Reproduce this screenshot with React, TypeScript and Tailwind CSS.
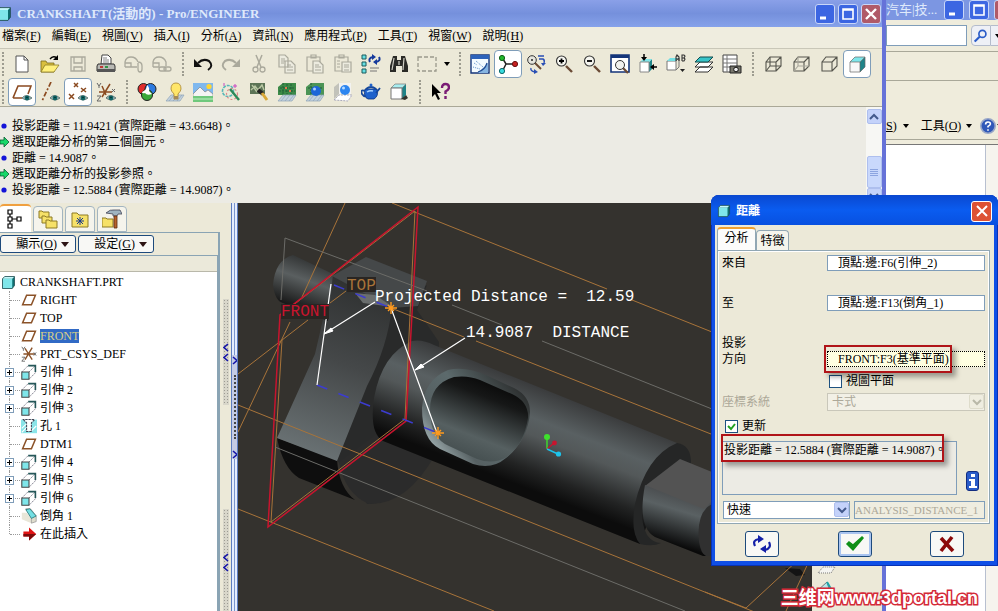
import React from 'react';
import clsx from 'clsx';

interface SvgProps {
  children: React.ReactNode;
  className?: string;
}

const Svg = ({ children, className = 'h-5 w-5' }: SvgProps) => (
  <svg viewBox="0 0 20 20" className={clsx('shrink-0', className)} fill="none" aria-hidden="true">
    {children}
  </svg>
);

/* ---------- shared drawing parts ---------- */

const Eye = () => (
  <g>
    <path d="M10 16q4-5 10 0q-5 4-10 0z" fill="#9fb8b8" stroke="#4a6464" strokeWidth="0.8" />
    <circle cx="15" cy="16" r="2.4" fill="#0f6464" />
    <circle cx="15" cy="15.5" r="0.8" fill="#052c2c" />
  </g>
);

const Ground = () => (
  <path d="M1 19l5-6h13l-4 6zM4 19l5-6M8 19l5-6M12 19l5-6" fill="#c4d2de" stroke="#8ea4b8" strokeWidth="0.7" />
);

const Cube = ({ className = 'h-4 w-4' }: { className?: string }) => (
  <Svg className={className}>
    <path d="M2 5l3-3h13v12l-3 4H2z" fill="#0c6e70" />
    <path d="M2 5h13v13H2z" fill="#7fe6ea" />
    <path d="M2 5l3-3h13l-3 3z" fill="#c4f8fa" />
    <path d="M2 5l3-3h13v12l-3 4H2z" stroke="#20484c" />
  </Svg>
);

const WireCube = ({ mode }: { mode: number }) => (
  <Svg>
    <path d="M3 8h10v9H3zM3 8l4-5h11v9l-5 5M13 8l5-5" stroke="#55554d" strokeWidth="1.1" />
    {mode < 2 && (
      <path d="M7 3v9h11M7 12l-4 5" stroke={mode === 0 ? '#55554d' : '#a8a79b'} strokeWidth="1.1" />
    )}
  </Svg>
);

const Lens = ({ sign }: { sign: '+' | '-' }) => (
  <Svg>
    <path d="M12 12l6 6" stroke="#6b4a35" strokeWidth="2.4" />
    <circle cx="7.500" cy="7" r="5" fill="#f6f6f0" stroke="#333" strokeWidth="1.1" />
    <path d={sign === '+' ? 'M5 7h5M7.500 4.500v5' : 'M5 7h5'} stroke="#000" strokeWidth="1.8" />
  </Svg>
);

const Plane = ({ className = 'h-4 w-4' }: { className?: string }) => (
  <Svg className={className}>
    <path d="M2 16L7 4h11l-5 12z" stroke="#8b5228" strokeWidth="1.9" />
  </Svg>
);

const Csys = ({ className = 'h-5 w-5' }: { className?: string }) => (
  <Svg className={className}>
    <path d="M3 10h14M5 3l9 14M14 2L5 17" stroke="#8b5228" strokeWidth="1.7" />
    <path d="M1 1l2 3 2-3M3 4v2M16 8l3 4M19 8l-3 4M1 14h4l-4 5h4" stroke="#555" strokeWidth="1" />
  </Svg>
);

const icons: Record<string, React.ReactNode> = {
  new: (
    <Svg>
      <path d="M4 2h8l4 4v12H4z" fill="#fff" stroke="#555" />
      <path d="M12 2v4h4" stroke="#555" />
    </Svg>
  ),
  open: (
    <Svg>
      <path d="M1 7h5l1 2h7v9H1z" fill="#d9bf3e" stroke="#7b6a1c" strokeWidth="0.8" />
      <path d="M1 18l4-7h14l-5 7z" fill="#fff07c" stroke="#8d7b24" strokeWidth="0.8" />
      <path d="M10 5q3-4 7-1" stroke="#000" strokeWidth="1.4" />
      <path d="M18 1v5h-5z" fill="#000" />
    </Svg>
  ),
  save: (
    <Svg>
      <path d="M3 3h14v14H3zM6 3v6h8V3M6 17v-4h8v4" stroke="#aaa99c" strokeWidth="1.3" />
    </Svg>
  ),
  print: (
    <Svg>
      <path d="M6 1h6l3 3v6H5z" fill="#fff" stroke="#444" />
      <path d="M7 4h4M7 6h6M7 8h6" stroke="#666" strokeWidth="0.8" />
      <path d="M2 10h16l1 2v5H1v-5z" fill="#b9b9b4" stroke="#333" />
      <path d="M1 15h18v3H1z" fill="#555" />
      <path d="M4 13h3" stroke="#c01818" strokeWidth="1.6" />
      <path d="M9 13h3" stroke="#108a28" strokeWidth="1.6" />
    </Svg>
  ),
  mail: (
    <Svg>
      <path d="M1 13V8q1-5 6-5t7 5M1 13h12M1 9h6v4M14 8q4 0 4 4v3q0 3-2 3t-2-3V9" stroke="#aaa99c" strokeWidth="1.3" />
    </Svg>
  ),
  mailLink: (
    <Svg>
      <path d="M1 13V8q1-5 6-5t7 5v4M1 13h6M1 9h6v4" stroke="#aaa99c" strokeWidth="1.3" />
      <rect x="7" y="13" width="7" height="4" rx="2" stroke="#aaa99c" strokeWidth="1.3" />
      <rect x="12" y="13" width="7" height="4" rx="2" stroke="#aaa99c" strokeWidth="1.3" />
    </Svg>
  ),
  undo: (
    <Svg>
      <path d="M5 9q5-5 11-2q5 5-1 9" stroke="#111" strokeWidth="2" />
      <path d="M1 5v8h8z" fill="#111" />
    </Svg>
  ),
  redo: (
    <Svg>
      <path d="M15 9Q10 4 4 7q-5 5 1 9" stroke="#aaa99c" strokeWidth="2" />
      <path d="M19 5v8h-8z" fill="#aaa99c" />
    </Svg>
  ),
  cut: (
    <Svg>
      <path d="M7 1l5 12M13 1L8 13" stroke="#aaa99c" strokeWidth="1.5" />
      <circle cx="6.500" cy="15.500" r="2.500" stroke="#aaa99c" strokeWidth="1.3" />
      <circle cx="13.500" cy="15.500" r="2.500" stroke="#aaa99c" strokeWidth="1.3" />
    </Svg>
  ),
  copy: (
    <Svg>
      <path d="M2 1h6l3 3v9H2zM8 7h6l4 4v8H8z" fill="#ecebdf" stroke="#aaa99c" strokeWidth="1.2" />
      <path d="M4 5h4M4 7h4M4 9h3M10 11h4M10 13h6M10 16h6" stroke="#aaa99c" />
    </Svg>
  ),
  paste: (
    <Svg>
      <path d="M2 3h13v14H2zM6 1h5v3H6z" stroke="#aaa99c" strokeWidth="1.2" />
      <path d="M8 7h6l4 4v8H8z" fill="#ecebdf" stroke="#aaa99c" strokeWidth="1.2" />
      <path d="M10 11h4M10 13h6M10 16h6" stroke="#aaa99c" />
    </Svg>
  ),
  pasteSpecial: (
    <Svg>
      <path d="M2 3h13v14H2zM6 1h5v3H6z" stroke="#aaa99c" strokeWidth="1.2" />
      <path d="M9 8h9v10H9z" fill="#ecebdf" stroke="#aaa99c" strokeWidth="1.2" />
      <path d="M4 7h3M4 10h3M4 13h3M11 11h5M11 13h5M11 16h5" stroke="#aaa99c" />
    </Svg>
  ),
  regenerate: (
    <Svg>
      {[1, 8, 15].map((y) => (
        <path key={y} d={`M1 ${y}h4v4H1z`} fill="#66dfe3" stroke="#1c5a5c" />
      ))}
      <path d="M9 8q-2-4 3-5M18 3q2 4-3 5" stroke="#163a9c" strokeWidth="2" />
      <path d="M11 0l4 3-4 3zM16 5v6l-4-3z" fill="#163a9c" />
      <path d="M9 14h9M9 17h7" stroke="#777" strokeWidth="1.2" />
    </Svg>
  ),
  find: (
    <Svg>
      <path d="M4 2h4v4h4V2h4l3 10v6h-6v-6H7v6H1v-6z" fill="#2a2a26" />
      <path d="M5 4l-2 12M15 4l-1 12M10 7v4" stroke="#d0cfc4" strokeWidth="1.2" />
    </Svg>
  ),
  select: (
    <Svg>
      <path d="M1 3h18v14H1z" stroke="#9a998c" strokeWidth="1.3" strokeDasharray="4 2" />
    </Svg>
  ),
  repaint: (
    <Svg>
      <path d="M1 1h18v18H1z" fill="#f4fbff" stroke="#14357a" strokeWidth="1.4" />
      <path d="M1 1h18v4H1z" fill="#2d62ba" />
      <path d="M8 19l10-10v10z" fill="#86b5e2" />
      <path d="M4 9l3 2M6 7l7 6M3 13l7 2" stroke="#5c8dc8" strokeDasharray="1 1" />
      <path d="M8 18q7-2 9-9" stroke="#224d94" strokeWidth="1.2" />
    </Svg>
  ),
  spin: (
    <Svg>
      <path d="M5 5l3 5h8M8 10l-3 6" stroke="#222" strokeWidth="1.5" />
      <circle cx="4" cy="4" r="2.600" fill="#22b82c" stroke="#0d5c14" />
      <circle cx="17" cy="10" r="2.600" fill="#c62020" stroke="#6a1010" />
      <circle cx="4" cy="17" r="2.600" fill="#38dce0" stroke="#0c686a" />
    </Svg>
  ),
  orient: (
    <Svg>
      <path d="M9 9l6 6" stroke="#6b4a35" strokeWidth="2" />
      <circle cx="6" cy="6" r="4.300" fill="#e6e6de" stroke="#333" />
      <circle cx="6" cy="6" r="1" fill="#222" />
      <path d="M12 2h6M13 5h4q2 1 1 4M5 14q-1 3 4 4" stroke="#2a4fb4" strokeWidth="1.4" />
      <path d="M15 9h5l-3 3zM8 15l4 3-4 2z" fill="#2a4fb4" />
    </Svg>
  ),
  zoomIn: <Lens sign="+" />,
  zoomOut: <Lens sign="-" />,
  refit: (
    <Svg>
      <path d="M1 1h18v17H1z" fill="#fff" stroke="#14357a" strokeWidth="1.6" />
      <path d="M1 1h18v3H1z" fill="#14357a" />
      <path d="M13 14l5 5" stroke="#6b4a35" strokeWidth="2.200" />
      <circle cx="10" cy="11" r="4.500" fill="#f2f2ee" stroke="#333" />
    </Svg>
  ),
  reorient: (
    <Svg>
      <path d="M11 8l3-3v10l-3 3z" fill="#1f8488" />
      <path d="M2 8l3-3h9l-3 3z" fill="#7fe6ea" />
      <path d="M2 8h9v10H2z" fill="#fff" stroke="#888" />
      <path d="M6 0v5M19 13h-5" stroke="#000" strokeWidth="1.5" />
      <path d="M3 3h6l-3 4zM16 10v6l-4-3z" fill="#000" />
    </Svg>
  ),
  savedViews: (
    <Svg>
      <path d="M1 7h9v9H1z" fill="#fff" stroke="#777" />
      <path d="M1 7l3-3h8l-2 3z" fill="#74dfe3" />
      <path d="M10 7l3-3v9l-3 3" stroke="#777" />
      <path d="M10 7V3l1-2 2 2v4M10 5h3M16 7V1h2l1 1-1 2h-2M18 4l1 1-1 2h-2" stroke="#333" strokeWidth="1.100" />
      <path d="M14 15h5l-2.500 3z" fill="#222" />
    </Svg>
  ),
  layers: (
    <Svg>
      <path d="M1 18l5-5h13l-5 5zM1 13l5-5h13l-5 5z" fill="#fff" stroke="#333" />
      <path d="M1 8l5-5h13l-5 5z" fill="#38c4c8" stroke="#124c4e" />
    </Svg>
  ),
  viewManager: (
    <Svg>
      <path d="M1 1h14v17H1z" fill="#fff" stroke="#444" />
      <path d="M5 1v17M1 5h14M1 9h14M1 13h14" stroke="#777" />
      <path d="M8 12h11v7H8z" fill="#77766c" stroke="#222" />
      <circle cx="14" cy="15.500" r="2.300" fill="#eee" stroke="#111" />
    </Svg>
  ),
  wireframe: <WireCube mode={0} />,
  hiddenLine: <WireCube mode={1} />,
  noHidden: <WireCube mode={2} />,
  shaded: (
    <Svg>
      <path d="M13 8l5-5v10l-5 5z" fill="#1f8488" />
      <path d="M3 8l5-5h10l-5 5z" fill="#7fe6ea" />
      <path d="M3 8h10v10H3z" fill="#f8f8f8" />
      <path d="M3 8l5-5h10v10l-5 5H3zM3 8h10v10M13 8l5-5" stroke="#666" strokeWidth="0.700" />
    </Svg>
  ),
  planeDisplay: (
    <Svg>
      <path d="M1 16L6 4h13l-3 8M1 16h9" stroke="#8b4a20" strokeWidth="1.600" />
      <Eye />
    </Svg>
  ),
  axisDisplay: (
    <Svg>
      <path d="M11 0L2 19" stroke="#8b4a20" strokeWidth="1.700" strokeDasharray="5 2 2 2" />
      <Eye />
    </Svg>
  ),
  pointDisplay: (
    <Svg>
      <path d="M6 1l4 4M10 1L6 5M1 12l5 5M6 12l-5 5M13 6l5 4M18 6l-5 4" stroke="#8b4a20" strokeWidth="1.500" />
      <Eye />
    </Svg>
  ),
  csysDisplay: (
    <Svg>
      <path d="M3 10h13M6 4l4 9M14 2L6 15" stroke="#8b4a20" strokeWidth="1.500" />
      <path d="M1 1l2 3 2-3M3 4v2M16 7l3 3M19 7l-3 3M1 14h4l-4 5h4" stroke="#666" />
      <Eye />
    </Svg>
  ),
  colors: (
    <Svg>
      <circle cx="6.500" cy="7" r="5.500" fill="#e02c2c" stroke="#222" />
      <circle cx="13.500" cy="7" r="5.500" fill="#2c7ae0" stroke="#222" />
      <circle cx="10" cy="13" r="5.500" fill="#3aa83a" stroke="#222" />
      <path d="M10 3q3 3 2 6l3 3q-5 2-7-1-3 1-3-1 5-2 5-7z" fill="#fff" />
    </Svg>
  ),
  light: (
    <Svg>
      <Ground />
      <path d="M6 7q0-6 5-6t5 6q0 2-3 5v5H9v-5Q6 9 6 7z" fill="#ffe66a" stroke="#a8842c" strokeWidth="0.800" />
      <path d="M9 14h4v3H9z" fill="#a58a58" />
    </Svg>
  ),
  scene: (
    <Svg>
      <path d="M0 1h20v11H0z" fill="#7fb8ee" />
      <path d="M0 12l7-7 5 5 3-2 5 4v3H0z" fill="#f4f4f4" stroke="#777" strokeWidth="0.600" />
      <circle cx="16" cy="4.500" r="2.600" fill="#ffd634" />
      <path d="M0 14h20v6H0z" fill="#6fc87c" />
      <path d="M0 17h20" stroke="#c2f0c4" />
    </Svg>
  ),
  effects: (
    <Svg>
      <circle cx="7" cy="9" r="5.500" stroke="#58b8b8" strokeWidth="1.600" strokeDasharray="3 1" />
      <circle cx="11" cy="12" r="5.500" stroke="#e08a8a" strokeWidth="1.200" strokeDasharray="2 2" />
      <path d="M9 7l9 11" stroke="#2c8a5a" strokeWidth="2.400" />
      <path d="M14 2v4M12 4h4M3 1v3" stroke="#c848c0" />
    </Svg>
  ),
  gallery: (
    <Svg>
      <path d="M1 1h15v11H1z" fill="#5c7456" />
      <path d="M2 8l4-4 3 4 4-5 2 5M3 3l5 7" stroke="#b9c8a4" strokeWidth="1.400" />
      <path d="M9 8l5 4" stroke="#222" strokeWidth="4" />
      <path d="M13 11l5 7" stroke="#d8a838" strokeWidth="3" />
    </Svg>
  ),
  room: (
    <Svg>
      <path d="M1 5l5-4h13v12H1z" fill="#3c8a48" />
      <path d="M6 1v12M10 2v10M14 2v10M3 6h15M2 9h16" stroke="#1d5a38" strokeWidth="0.900" strokeDasharray="2 1" />
      <path d="M8 5h2v2H8zM12 8h2v2h-2z" fill="#e07a50" />
      <Ground />
    </Svg>
  ),
  roomBall: (
    <Svg>
      <path d="M1 5l5-4h13v12H1z" fill="#4c9456" />
      <path d="M6 1v12M3 6h15" stroke="#1d5a38" strokeDasharray="2 1" />
      <Ground />
      <circle cx="11" cy="9" r="5" fill="#1d66d8" />
      <circle cx="9.500" cy="7" r="1.500" fill="#a8d0ff" />
    </Svg>
  ),
  ball: (
    <Svg>
      <path d="M1 5l5-4v11l-5 5z" fill="#c2c2ba" />
      <path d="M6 1h12v11H6z" fill="#f2f2f0" />
      <path d="M1 18l5-5h13l-4 6z" fill="#fff" stroke="#aab" strokeDasharray="2 1" />
      <circle cx="12" cy="8" r="5" fill="#2d86f0" />
      <circle cx="10.500" cy="6" r="1.500" fill="#b8dcff" />
    </Svg>
  ),
  render: (
    <Svg>
      <path d="M4 7h12q2 7-3 10H7q-5-2-3-10z" fill="#1f62cc" stroke="#0d3480" strokeWidth="0.800" />
      <path d="M15 11l4-5M4 9Q-1 7 1 12q2 3 4 2M5 7q5-4 10 0" stroke="#15489c" strokeWidth="1.800" />
      <circle cx="10" cy="3" r="1.500" fill="#1f62cc" />
      <path d="M6 10q3-2 6-1" stroke="#a9d4ff" strokeWidth="1.500" />
    </Svg>
  ),
  perspective: (
    <Svg>
      <path d="M13 6l4-4v11l-4 4z" fill="#1f8488" />
      <path d="M2 6l4-4h11l-4 4z" fill="#a8eef0" stroke="#777" strokeWidth="0.700" />
      <path d="M2 6h11v11H2z" fill="#fff" stroke="#777" />
      <path d="M12 17l5-4 2 3-3 2z" fill="#33332c" />
    </Svg>
  ),
  help: (
    <Svg>
      <path d="M2 2v13l3-3 3 6 2-1-3-6h4z" fill="#000" />
      <path d="M12 6q0-4 3.500-4T19 5.500q0 2-3.500 4V12M15.500 14v3" stroke="#7a1c74" strokeWidth="2.400" />
    </Svg>
  ),
};

/* ---------- main window ---------- */

const menus = [
  ['檔案', 'F'], ['編輯', 'E'], ['視圖', 'V'], ['插入', 'I'], ['分析', 'A'],
  ['資訊', 'N'], ['應用程式', 'P'], ['工具', 'T'], ['視窗', 'W'], ['說明', 'H'],
];

const ToolGroup = ({ names, active = [] }: { names: string[]; active?: string[] }) => (
  <div className="flex shrink-0">
    {names.map((name) => (
      <button
        key={name}
        aria-label={name}
        className={clsx(
          'flex h-7 w-7 shrink-0 items-center justify-center',
          active.includes(name) && 'rounded-sm border border-[#7f9db9] bg-white'
        )}
      >
        {icons[name]}
      </button>
    ))}
  </div>
);

const Grip = () => (
  <div className="flex w-[13px] shrink-0 justify-center">
    <div className="h-6 border-l-2 border-dotted border-[#9d9c90]" />
  </div>
);

const CaptionButton = ({ kind }: { kind: 'min' | 'max' | 'close' }) => (
  <button
    aria-label={kind}
    className={clsx(
      'flex h-5 w-5 shrink-0 items-center justify-center rounded-[3px] border border-[#c9d6f8]',
      kind === 'close' ? 'bg-[#b05a68]' : 'bg-[#3c66e2]'
    )}
  >
    <svg viewBox="0 0 16 16" className="h-4 w-4" fill="none" stroke="#fff" aria-hidden="true">
      {kind === 'min' && <path d="M3 12h6" strokeWidth="3" />}
      {kind === 'max' && <path d="M3 3h10v10H3zM3 4h10" strokeWidth="1.600" />}
      {kind === 'close' && <path d="M3 3l10 10M13 3L3 13" strokeWidth="2.400" />}
    </svg>
  </button>
);

const Chevron = ({ up, muted }: { up?: boolean; muted?: boolean }) => (
  <span
    className={clsx(
      'flex h-[15px] w-[15px] shrink-0 items-center justify-center rounded-xs border',
      muted ? 'border-[#dedccb] bg-[#efede0]' : 'border-[#aebfee] bg-[#c4d2fa]'
    )}
  >
    <svg viewBox="0 0 10 10" className="h-[10px] w-[10px]" fill="none" aria-hidden="true">
      <path d={up ? 'M1 7l4-4 4 4' : 'M1 3l4 4 4-4'} stroke={muted ? '#b9b8a8' : '#43598c'} strokeWidth="2" />
    </svg>
  </span>
);

const messages = [
  { prompt: false, text: '投影距離 = 11.9421 (實際距離 = 43.6648)。' },
  { prompt: true, text: '選取距離分析的第二個圖元。' },
  { prompt: false, text: '距離 = 14.9087。' },
  { prompt: true, text: '選取距離分析的投影參照。' },
  { prompt: false, text: '投影距離 = 12.5884 (實際距離 = 14.9087)。' },
];

const MessageLog = () => (
  <div className="flex h-24 shrink-0 bg-[#ecebe4]">
    <ul className="flex flex-1 flex-col justify-end pb-[5px]">
      {messages.map((m) => (
        <li key={m.text} className="flex h-4 items-center gap-[2px] leading-4">
          <svg viewBox="0 0 10 12" className="h-3 w-[10px]" aria-hidden="true">
            {m.prompt ? (
              <path d="M0 4h4V1l5 5-5 5V8H0z" fill="#18d868" stroke="#0b5c30" strokeWidth="0.800" />
            ) : (
              <circle cx="4" cy="6" r="2.600" fill="#1414d8" />
            )}
          </svg>
          {m.text}
        </li>
      ))}
    </ul>
    <div className="flex w-4 flex-col items-center bg-[#f7f7f4] pt-[2px]">
      <Chevron up />
      <div className="flex-1" />
      <div className="flex h-8 w-[15px] shrink-0 flex-col items-center justify-center gap-px rounded-xs border border-[#aebfee] bg-[#c9d8fc]">
        {[0, 1, 2, 3].map((i) => (
          <span key={i} className="h-px w-2 bg-[#8ca4e0]" />
        ))}
      </div>
      <Chevron />
    </div>
  </div>
);

/* ---------- model tree ---------- */

const treeIcons: Record<string, React.ReactNode> = {
  plane: <Plane />,
  csys: <Csys className="h-4 w-4" />,
  extrude: (
    <Svg className="h-4 w-4">
      <path d="M1 10l8-8h9v9l-8 8M10 10l8-8" stroke="#667" strokeDasharray="2 1" />
      <path d="M9 2h9v8" stroke="#26585a" strokeWidth="2" />
      <path d="M1 10h9v9H1z" fill="#7fe6ea" stroke="#444" strokeWidth="1.300" />
    </Svg>
  ),
  hole: (
    <Svg className="h-4 w-4">
      <path d="M0 2h20v17H0z" fill="#8ae4e8" />
      <path d="M1 13l6-6M1 18l6-6M13 16l6-6" stroke="#fff" strokeWidth="1.400" />
      <path d="M3 2l4 4v11h6V6l4-4z" fill="#fff" stroke="#445" strokeWidth="1.300" strokeDasharray="3 1" />
    </Svg>
  ),
  chamfer: (
    <Svg className="h-4 w-4">
      <path d="M1 6h6l6 7v6L1 14z" fill="#e8e6d8" />
      <path d="M6 1h6l7 9v7l-6 2v-7z" fill="#dedccd" stroke="#888" strokeWidth="0.800" />
      <path d="M6 2l5-1 8 9-6 3z" fill="#74dfe3" stroke="#267274" />
    </Svg>
  ),
  insert: (
    <Svg className="h-4 w-4">
      <path d="M3 7h7V2l9 8-9 8v-5H3z" fill="#e01414" />
      <path d="M3 10h16l-9 8v-5H3z" fill="#7c0a0a" />
    </Svg>
  ),
};

interface TreeItem {
  label: string;
  icon: string;
  expandable?: boolean;
  selected?: boolean;
}

const treeItems: TreeItem[] = [
  { label: 'RIGHT', icon: 'plane' },
  { label: 'TOP', icon: 'plane' },
  { label: 'FRONT', icon: 'plane', selected: true },
  { label: 'PRT_CSYS_DEF', icon: 'csys' },
  { label: '引伸 1', icon: 'extrude', expandable: true },
  { label: '引伸 2', icon: 'extrude', expandable: true },
  { label: '引伸 3', icon: 'extrude', expandable: true },
  { label: '孔 1', icon: 'hole' },
  { label: 'DTM1', icon: 'plane' },
  { label: '引伸 4', icon: 'extrude', expandable: true },
  { label: '引伸 5', icon: 'extrude', expandable: true },
  { label: '引伸 6', icon: 'extrude', expandable: true },
  { label: '倒角 1', icon: 'chamfer' },
  { label: '在此插入', icon: 'insert' },
];

const tabClass =
  'flex h-[26px] w-[30px] items-center justify-center rounded-t-sm border border-[#a3b5c0] bg-[#f5f4ec]';

const TreeTabs = () => (
  <div className="flex h-[29px] shrink-0 items-end gap-[2px] pt-px">
    <button aria-label="Model tree" className="flex h-7 w-[31px] items-center justify-center rounded-t-sm border-t-2 border-[#f0a040] bg-white pr-1">
      <Svg>
        <path d="M4 1h4v4H4zM4 8h4v4H4zM4 15h4v4H4zM13 8h4v4h-4zM6 5v3M6 12v3M8 10h5" stroke="#000" strokeWidth="1.200" />
      </Svg>
    </button>
    <button aria-label="Folders" className={tabClass}>
      <Svg>
        <path d="M1 2h3l1 1h6v6H1z" fill="#f6e168" stroke="#8d7b24" />
        <path d="M4 7h3l1 1h6v6H4z" fill="#f6e168" stroke="#8d7b24" />
        <path d="M8 11h3l1 1h7v7H8z" fill="#f6e168" stroke="#8d7b24" />
      </Svg>
    </button>
    <button aria-label="Favorites" className={tabClass}>
      <Svg>
        <path d="M2 4h5l2 2h9v12H2z" fill="#f6e168" stroke="#8d7b24" />
        <path d="M10 8v8M6 12h8M7 9l6 6M13 9l-6 6" stroke="#1a3a8c" />
      </Svg>
    </button>
    <button aria-label="Connections" className={tabClass}>
      <Svg>
        <path d="M0 9h4l1 1h6v8H0z" fill="#f6e168" stroke="#8d7b24" />
        <path d="M4 4q4-4 9-3h5l2 4h-4l-1 2h-4V5z" fill="#9fb4c0" stroke="#445" strokeWidth="0.800" />
        <path d="M12 7h3v12h-3z" fill="#b8622c" stroke="#5c2c10" strokeWidth="0.800" />
      </Svg>
    </button>
  </div>
);

const PanelButton = ({ label, hotkey }: { label: string; hotkey: string }) => (
  <button className="flex h-[18px] w-[76px] items-center justify-end gap-1 rounded-[3px] border border-[#1d4a7c] bg-[#f8f8f5] pr-[6px] leading-4">
    <span>{label}(<u>{hotkey}</u>)</span>
    <svg viewBox="0 0 8 5" className="h-[5px] w-2" aria-hidden="true">
      <path d="M0 0h8L4 5z" fill="#2c1414" />
    </svg>
  </button>
);

const ModelTree = () => (
  <aside className="flex w-[220px] shrink-0 flex-col">
    <TreeTabs />
    <div className="flex flex-1 flex-col border-t border-r-2 border-[#8aa4b4]">
      <div className="flex shrink-0 gap-[2px] py-[2px]">
        <PanelButton label="顯示" hotkey="O" />
        <PanelButton label="設定" hotkey="G" />
      </div>
      <div className="flex flex-1 flex-col border-t border-r border-[#8aa4b4]">
        <div className="h-4 shrink-0 border-b border-[#b9b8aa] bg-[#ebe9da]" />
        <ul className="flex-1 bg-white pt-px">
          <li className="flex h-[18px] items-center gap-1 pl-px">
            <Cube className="h-[15px] w-[15px]" />
            CRANKSHAFT.PRT
          </li>
          {treeItems.map((item, i) => (
            <li key={item.label} className="flex h-[18px] items-center">
              <span className="relative flex h-full w-5 shrink-0 items-center pl-[5px]">
                <span
                  className={clsx(
                    'absolute top-0 left-[9px] border-l border-dotted border-[#9a9a9a]',
                    i === treeItems.length - 1 ? 'h-1/2' : 'h-full'
                  )}
                />
                <span className="absolute top-1/2 right-0 left-[10px] border-t border-dotted border-[#9a9a9a]" />
                {item.expandable && (
                  <button
                    aria-label={`Expand ${item.label}`}
                    className="relative flex h-[9px] w-[9px] items-center justify-center border border-[#7f9db9] bg-white"
                  >
                    <svg viewBox="0 0 7 7" className="h-[7px] w-[7px] shrink-0" aria-hidden="true">
                      <path d="M1 3.500h5M3.500 1v5" stroke="#000" />
                    </svg>
                  </button>
                )}
              </span>
              <span className="mr-[3px] ml-px">{treeIcons[item.icon]}</span>
              <span className={clsx('leading-[14px]', item.selected && 'bg-[#316ac5] text-[#d8d088]')}>
                {item.label}
              </span>
            </li>
          ))}
        </ul>
      </div>
    </div>
  </aside>
);

const Arrows = ({ d }: { d: string }) => (
  <svg viewBox="0 0 6 20" className="h-5 w-[6px] shrink-0" fill="none" aria-hidden="true">
    <path d={d} stroke="#1414a8" strokeWidth="1.600" />
  </svg>
);

const Hatch = () => (
  <div className="flex h-[106px] w-[6px] shrink-0 flex-col items-center justify-center bg-[#d8d6ca] bg-[radial-gradient(#9c9b92_1px,transparent_1px)] bg-[length:3px_3px]">
    <Arrows d="M5 2L1 5.500l4 3.500M5 12l-4 3.500 4 3.500" />
  </div>
);

const Splitter = () => (
  <div className="flex w-[18px] shrink-0">
    <div className="flex w-[11px] flex-col items-center overflow-hidden pt-24">
      <Hatch />
      <div className="h-[104px] shrink-0" />
      <Hatch />
    </div>
    <div className="flex flex-1 flex-col overflow-hidden border-x border-[#5c7cc0] bg-[#e4ecfc]">
      <div className="w-[3px] flex-1 border-r border-[#7a94cc]" />
      <div className="flex h-[104px] shrink-0 flex-col items-center justify-between bg-[#c4cbe4]">
        <Arrows d="M1 2l4 3.500L1 9" />
        <div className="flex-1 border-l-2 border-dotted border-[#444]" />
        <Arrows d="M1 12l4 3.500L1 19" />
      </div>
      <div className="w-[3px] flex-1 border-r border-[#7a94cc]" />
    </div>
  </div>
);

/* ---------- 3D view ---------- */

const Star = ({ x, y }: { x: number; y: number }) => (
  <path
    d={`M${x - 6} ${y}h12M${x} ${y - 6}v12M${x - 3} ${y - 3}l6 6M${x + 3} ${y - 3}l-6 6`}
    stroke="#ff9a1e"
    strokeWidth="1.400"
  />
);

const ModelView = () => (
  <div className="relative min-w-0 flex-1 bg-[#34322e]">
    <svg
      viewBox="238 203 574 408"
      preserveAspectRatio="xMinYMin slice"
      className="absolute inset-0 h-full w-full"
      fill="none"
      fontFamily='"Liberation Mono", monospace'
      fontSize="16"
    >
      <defs>
        <linearGradient id="pin" gradientUnits="userSpaceOnUse" x1="312" y1="258" x2="293" y2="312">
          <stop offset="0" stopColor="#2e3030" />
          <stop offset="0.400" stopColor="#5a5f60" />
          <stop offset="0.700" stopColor="#333535" />
          <stop offset="1" stopColor="#0a0a0a" />
        </linearGradient>
        <linearGradient id="web" gradientUnits="userSpaceOnUse" x1="370" y1="290" x2="310" y2="455">
          <stop offset="0" stopColor="#303232" />
          <stop offset="0.450" stopColor="#454849" />
          <stop offset="1" stopColor="#6a7274" />
        </linearGradient>
        <linearGradient id="journal" gradientUnits="userSpaceOnUse" x1="552" y1="390" x2="512" y2="492">
          <stop offset="0" stopColor="#38393a" />
          <stop offset="0.300" stopColor="#596062" />
          <stop offset="0.450" stopColor="#535859" />
          <stop offset="0.750" stopColor="#222323" />
          <stop offset="0.920" stopColor="#0c0c0c" />
        </linearGradient>
        <linearGradient id="bore" gradientUnits="userSpaceOnUse" x1="498" y1="380" x2="468" y2="456">
          <stop offset="0" stopColor="#070707" />
          <stop offset="0.250" stopColor="#161717" />
          <stop offset="0.750" stopColor="#566061" />
          <stop offset="1" stopColor="#465051" />
        </linearGradient>
        <linearGradient id="rim" gradientUnits="userSpaceOnUse" x1="435" y1="455" x2="520" y2="385">
          <stop offset="0" stopColor="#a4b4b6" />
          <stop offset="0.250" stopColor="#566062" />
          <stop offset="0.550" stopColor="#5c6a6c" />
          <stop offset="1" stopColor="#2a2c2c" />
        </linearGradient>
        <linearGradient id="shaft" gradientUnits="userSpaceOnUse" x1="682" y1="496" x2="668" y2="543">
          <stop offset="0" stopColor="#4b4e50" />
          <stop offset="0.300" stopColor="#5a6163" />
          <stop offset="1" stopColor="#0a0a0a" />
        </linearGradient>
      </defs>

      {/* crank web */}
      <path d="M392 305l35-20-10 25 22 32-6 110q-28 52-66 52l-30-44z" fill="#292a2a" />
      <path d="M435 455q-28 50-66 49-24-10-30-42l40-30z" fill="#2b2b2b" />
      <path d="M277 438l60 22q2 28 18 40l-56-22q-16-10-22-40z" fill="#0e0e0e" />
      <path d="M333 276l59 30q-4 40-25 80l-30 75-60-23 38-84z" fill="url(#web)" />
      <path d="M366 257l61 24-9 25-26 2-60-32z" fill="#454849" />
      <path d="M355 293l20 2 18 12-30-4z" fill="#6a6e6e" />

      {/* crank pin */}
      <path d="M293 255q-18 5-20 30 2 16 10 18l45 18 5-47z" fill="url(#pin)" />

      {/* main journal */}
      <path d="M412 341q10-2 22 4l243 98-37 101-257-103q-14-8-9-43 8-44 38-57z" fill="url(#journal)" />
      <path d="M677 443q14 2 14 20l-44 26q-10 26 0 46 6 8 14 8-8 4-21 1-10-12-5-40 11-48 42-61z" fill="#252626" />
      <path d="M680 459l32 13v34l-8 4-59-24z" fill="#535353" />
      <path d="M645 485l59 24 8-8v55l-9 0-48-19q-18-10-10-52z" fill="url(#shaft)" />
      <path d="M712 504q-16 8-13 38 2 12 7 14h6z" fill="#303030" />

      {/* oil slot */}
      <path
        d="M422 408q2-28 26-38 18-4 40 6l26 12q16 8 16 24-2 28-24 46-14 12-33 6l-33-15q-18-9-18-41z"
        fill="url(#rim)"
      />
      <path
        d="M430 410q0-26 24-33 14-2 26 3l32 14q17 8 16 24-4 26-21 39-14 8-30 2l-28-13q-19-8-19-36z"
        fill="url(#bore)"
      />
      <path d="M785 568l15 1 5 6-9 1z" fill="#141414" />

      {/* datum plane outlines */}
      <g stroke="#a8743a" strokeWidth="1">
        <path d="M345 203L302 297M290 322L238 432M392 203l215 86M632 300l180 72" />
        <path d="M238 374l70-54M330 303l16-12M391 308l73 29M476 341l336 133" />
        <path d="M238 405l574 230M238 509l256 102" />
        <path d="M415 211L283 313M282 340L271 522L405 419L415 211" />
        <path d="M705 592l41 16 52-48M786 611l24-52" />
      </g>
      <g stroke="#6c6c68" strokeWidth="1">
        <path d="M281 300l4-62 142 53M452 305l50 20M542 341l170 68M275 447l410 164" />
      </g>
      <path d="M418 207L280 315l-12 212 138-106z" stroke="#c8142e" strokeWidth="1.500" />

      {/* measurement */}
      <path d="M334 285l57 23M317 385l121 48" stroke="#3c3cd0" strokeWidth="1.500" strokeDasharray="11 12" />
      <path
        d="M331 284l-14 101M375 302l-51 32M391 308l46 125M465 338l-50 32"
        stroke="#fff"
        strokeWidth="1.200"
      />
      <path d="M324 334l7-6 2 3zM415 370l6-6 3 3z" fill="#fff" stroke="#fff" />
      <Star x={391} y={308} />
      <Star x={438} y={433} />

      <path d="M347 277h29v15h-29zM281 304h48v15h-48z" fill="#292522" />
      <text x="347" y="290" fill="#a8743a">TOP</text>
      <text x="281" y="316" fill="#c8142e">FRONT</text>
      <text x="375" y="301" fill="#fff" className="whitespace-pre">{'Projected Distance =  12.59'}</text>
      <text x="466" y="337" fill="#fff" className="whitespace-pre">{'14.9087  DISTANCE'}</text>

      {/* spin centre */}
      <path d="M547 449v-12" stroke="#3ee02c" strokeWidth="1.400" />
      <path d="M547 449l7-6" stroke="#c8142e" strokeWidth="1.400" />
      <path d="M547 449l11 5" stroke="#1cc4ec" strokeWidth="1.400" />
      <circle cx="547" cy="437" r="3" fill="#3ee02c" />
      <circle cx="554.500" cy="443" r="2.400" fill="#c8142e" />
      <circle cx="558.500" cy="454" r="2.600" fill="#1cc4ec" />
    </svg>
  </div>
);

const FeatureBar = () => (
  <div className="flex w-[70px] shrink-0 flex-col bg-[#ece9d8] pt-[356px] pl-1">
    <Svg>
      <path d="M2 14l5-6h12l-4 6z" fill="#f4f4f0" stroke="#777" strokeDasharray="1 1" />
    </Svg>
    <Svg>
      <path d="M1 12l10-9 3 10-3 6z" fill="#b4e8ea" stroke="#777" />
      <path d="M11 3l8 14" stroke="#1ca4a8" strokeWidth="2" />
    </Svg>
  </div>
);

const MainWindow = () => (
  <section className="flex min-w-0 flex-1 flex-col border-r-4 border-[#6672d8] bg-[#ece9d8]">
    <header className="flex h-[27px] shrink-0 items-center bg-linear-to-b from-[#8aa0e8] via-[#7590dc] to-[#86a2ea] pr-px">
      <Cube className="-ml-1 h-4 w-4" />
      <h1 className="ml-[5px] flex-1 text-[13px] font-bold text-[#dfe9fb]">CRANKSHAFT(活動的) - Pro/ENGINEER</h1>
      <div className="flex gap-[3px]">
        <CaptionButton kind="min" />
        <CaptionButton kind="max" />
        <CaptionButton kind="close" />
      </div>
    </header>
    <nav className="flex h-[22px] shrink-0 items-center gap-[11px] border-b border-[#c9c7b8] bg-[#efeddf] pb-1 pl-[2px]">
      {menus.map(([label, key]) => (
        <button key={label} className="whitespace-nowrap">
          {label}(<u>{key}</u>)
        </button>
      ))}
    </nav>
    <div className="flex shrink-0 flex-col border-b border-[#aaa897] pt-px">
      <div className="flex h-7 items-center overflow-hidden">
        <div className="mr-1 ml-[2px] h-6 shrink-0 border-l-2 border-dotted border-[#9d9c90]" />
        <ToolGroup names={['new', 'open', 'save', 'print', 'mail', 'mailLink']} />
        <Grip />
        <ToolGroup names={['undo', 'redo', 'cut', 'copy', 'paste', 'pasteSpecial', 'regenerate', 'find', 'select']} />
        <button aria-label="Selection options" className="flex w-3 shrink-0 justify-center">
          <svg viewBox="0 0 6 4" className="h-1 w-[6px]" aria-hidden="true">
            <path d="M0 0h6L3 4z" fill="#000" />
          </svg>
        </button>
        <Grip />
        <ToolGroup
          names={['repaint', 'spin', 'orient', 'zoomIn', 'zoomOut', 'refit', 'reorient', 'savedViews', 'layers', 'viewManager']}
          active={['spin']}
        />
        <Grip />
        <ToolGroup names={['wireframe', 'hiddenLine', 'noHidden', 'shaded']} active={['shaded']} />
      </div>
      <div className="flex h-7 items-center overflow-hidden">
        <div className="mr-1 ml-[2px] h-6 shrink-0 border-l-2 border-dotted border-[#9d9c90]" />
        <ToolGroup
          names={['planeDisplay', 'axisDisplay', 'pointDisplay', 'csysDisplay']}
          active={['planeDisplay', 'pointDisplay']}
        />
        <Grip />
        <ToolGroup
          names={['colors', 'light', 'scene', 'effects', 'gallery', 'room', 'roomBall', 'ball', 'render', 'perspective']}
        />
        <Grip />
        <ToolGroup names={['help']} />
      </div>
    </div>
    <MessageLog />
    <div className="flex min-h-0 flex-1">
      <ModelTree />
      <Splitter />
      <ModelView />
      <FeatureBar />
    </div>
  </section>
);

/* ---------- browser window behind ---------- */

const DropArrow = () => (
  <svg viewBox="0 0 6 4" className="h-1 w-[6px] shrink-0" aria-hidden="true">
    <path d="M0 0h6L3 4z" fill="#000" />
  </svg>
);

const BrowserWindow = () => (
  <section className="flex w-28 shrink-0 flex-col overflow-hidden bg-[#efecdc]">
    <header className="flex h-5 shrink-0 items-center gap-[5px] bg-[#7c96e2] text-[13px] text-[#dfe9fb]">
      <span className="w-[53px] shrink-0 whitespace-nowrap">汽车|技...</span>
      <CaptionButton kind="min" />
      <CaptionButton kind="max" />
      <CaptionButton kind="close" />
    </header>
    <div className="flex h-8 shrink-0 items-center gap-1 border-b border-[#a9a899]">
      <input aria-label="Address" className="h-[21px] w-[81px] border border-[#7f9db9] bg-white" />
      <div className="flex">
        <button aria-label="Search" className="flex h-[21px] w-5 shrink-0 items-center justify-center rounded-l-sm border border-[#b4bccc] bg-[#eef0f6]">
          <Svg className="h-[14px] w-[14px]">
            <circle cx="12" cy="7" r="5" stroke="#2a5cc8" strokeWidth="2.400" />
            <path d="M8 11l-7 7" stroke="#2a5cc8" strokeWidth="3" />
          </Svg>
        </button>
        <button aria-label="Search options" className="flex h-[21px] w-3 shrink-0 items-center border-y border-[#b4bccc] bg-[#eef0f6] pl-1">
          <DropArrow />
        </button>
      </div>
    </div>
    <div className="h-[29px] shrink-0 border-b border-[#a9a899]" />
    <div className="flex h-[59px] shrink-0 items-end gap-3 border-b border-[#a9a899] pb-[5px] whitespace-nowrap">
      <button className="flex items-center gap-[6px]">
        <span><u>S</u>)</span>
        <DropArrow />
      </button>
      <button className="flex items-center gap-[5px]">
        <span>工具(<u>O</u>)</span>
        <DropArrow />
      </button>
      <button aria-label="Help" className="-ml-1 flex shrink-0 items-center gap-px">
        <Svg className="h-4 w-4">
          <circle cx="10" cy="10" r="9" fill="#3058b8" stroke="#9aa8c8" strokeWidth="2" />
          <path d="M7 8q0-3 3-3t3 2.500q0 1.500-3 3V12M10 14v2" stroke="#fff" strokeWidth="2" />
        </Svg>
        <DropArrow />
      </button>
    </div>
    <div className="mt-1 flex flex-1 border-t border-[#777]">
      <div className="flex-1 border-r border-[#b8c0d0] bg-white" />
      <div className="w-3 bg-[#f6f4ee]" />
    </div>
  </section>
);

/* ---------- distance dialog ---------- */

const Field = ({ id, label, value, focused }: { id: string; label: string; value: string; focused?: boolean }) => (
  <div className="flex items-center">
    <label htmlFor={id} className="w-[105px] shrink-0">{label}</label>
    <div className="relative min-w-0 flex-1">
      <input
        id={id}
        defaultValue={value}
        className={clsx(
          'block h-4 w-full border pl-[10px] outline-none',
          focused ? 'border-dotted border-black bg-[#ffffe1]' : 'border-[#7f9db9] bg-white'
        )}
      />
      {focused && (
        <span className="pointer-events-none absolute -top-[6px] -left-[3px] h-7 w-[128px] border-2 border-[#b01418] shadow-[4px_4px_5px_rgba(0,0,0,0.35)]" />
      )}
    </div>
  </div>
);

const DialogButton = ({ label, children, primary }: { label: string; children: React.ReactNode; primary?: boolean }) => (
  <button
    aria-label={label}
    className={clsx(
      'flex h-[26px] w-[34px] items-center justify-center rounded-[3px] border border-[#1d4a7c] bg-[#f8f8f5]',
      primary && 'shadow-[inset_0_0_0_2px_#a9c4f0]'
    )}
  >
    {children}
  </button>
);

const DistanceDialog = () => (
  <section
    role="dialog"
    aria-label="距離"
    className="absolute top-[195px] right-0 w-[287px] rounded-t-lg bg-[#0f4fe6] px-1 pb-[5px] shadow-[inset_0_0_0_1px_#0832b4]"
  >
    <header className="-mx-1 flex h-[30px] items-center rounded-t-lg bg-linear-to-b from-[#0a48d0] via-[#0a5cf0] to-[#0850e0] px-[6px] pt-[2px]">
      <Cube className="h-[14px] w-[14px]" />
      <h2 className="ml-[5px] flex-1 font-bold text-white">距離</h2>
      <button aria-label="Close" className="flex h-[21px] w-[21px] items-center justify-center rounded-[3px] border border-white bg-[#dd5234]">
        <svg viewBox="0 0 16 16" className="h-4 w-4" aria-hidden="true">
          <path d="M3 3l10 10M13 3L3 13" stroke="#fff" strokeWidth="2" />
        </svg>
      </button>
    </header>
    <div className="bg-[#ece9d8] px-[2px] pt-[2px]">
      <div className="flex items-end">
        <button className="h-[23px] w-[39px] rounded-t-sm border-x border-t-2 border-x-[#91a7b4] border-t-[#f0a030] bg-[#fcfcfb] pb-1">分析</button>
        <button className="h-5 w-[33px] rounded-t-sm border border-b-0 border-[#91a7b4] bg-[#f5f4ec]">特徵</button>
      </div>
      <div className="mr-[2px] border border-[#91a7b4] px-1 pt-1 pb-1 shadow-[inset_0_0_0_1px_#fff]">
        <Field id="from" label="來自" value="頂點:邊:F6(引伸_2)" />
        <div className="mt-6">
          <Field id="to" label="至" value="頂點:邊:F13(倒角_1)" />
        </div>
        <div className="mt-6 leading-4">投影</div>
        <Field id="direction" label="方向" value="FRONT:F3(基準平面)" focused />
        <label className="mt-[6px] ml-[107px] flex h-4 items-center gap-1">
          <input type="checkbox" className="h-[13px] w-[13px] appearance-none border border-[#1d5180] bg-white" />
          視圖平面
        </label>
        <div className="mt-1 flex items-center text-[#aca899]">
          <label htmlFor="csys" className="w-[105px] shrink-0">座標系統</label>
          <div className="relative min-w-0 flex-1">
            <select id="csys" disabled className="block h-[18px] w-full appearance-none border border-[#c9c7ba] bg-[#f2f0e6] pl-1 leading-4 opacity-100">
              <option>卡式</option>
            </select>
            <span className="pointer-events-none absolute top-px right-px"><Chevron muted /></span>
          </div>
        </div>
        <label className="mt-[6px] ml-[3px] flex h-[18px] items-center gap-1">
          <span className="relative h-[13px] w-[13px]">
            <input type="checkbox" defaultChecked className="block h-[13px] w-[13px] appearance-none border border-[#1d5180] bg-white" />
            <svg viewBox="0 0 13 13" className="pointer-events-none absolute inset-0 h-[13px] w-[13px]" aria-hidden="true">
              <path d="M3 6l3 3 4-5" stroke="#21a121" strokeWidth="2" fill="none" />
            </svg>
          </span>
          更新
        </label>
        <div className="mt-[6px] flex items-end gap-[9px]">
          <div className="relative h-[54px] w-[235px] border border-[#7f9db9] bg-[#ecebe4] pl-px leading-4 whitespace-nowrap">
            <output>投影距離 = 12.5884 (實際距離 = 14.9087)。</output>
            <span className="pointer-events-none absolute -top-[8px] -left-[2px] h-7 w-[223px] border-2 border-[#b01418] shadow-[4px_4px_5px_rgba(0,0,0,0.35)]" />
          </div>
          <button aria-label="Information" className="mb-1 flex h-5 w-[13px] items-center justify-center rounded-[3px] border border-[#122c80] bg-[#2a5cc8]">
            <svg viewBox="0 0 10 16" className="h-4 w-[10px] shrink-0" aria-hidden="true">
              <path d="M3 1h4v3H3zM1 6h6v7h2v2H1v-2h2V8H1z" fill="#fff" />
            </svg>
          </button>
        </div>
        <div className="mt-[6px] flex gap-1 pl-px">
          <div className="relative w-[127px] shrink-0">
            <select aria-label="類型" className="block h-[18px] w-full appearance-none border border-[#7f9db9] bg-white pl-[3px] leading-4">
              <option>快速</option>
            </select>
            <span className="pointer-events-none absolute top-px right-px"><Chevron /></span>
          </div>
          <input
            aria-label="名稱"
            disabled
            defaultValue="ANALYSIS_DISTANCE_1"
            className="h-[18px] min-w-0 flex-1 border border-[#7f9db9] bg-[#efede0] text-[11px] text-[#aca899]"
          />
        </div>
      </div>
      <div className="flex justify-between px-7 pt-[7px] pb-1">
        <DialogButton label="Repeat">
          <Svg>
            <path d="M3 12q-3-6 4-7M17 8q3 6-4 8" stroke="#1420a8" strokeWidth="2.200" />
            <path d="M6 1l6 4-6 4zM14 11v8l-6-4z" fill="#1420a8" />
          </Svg>
        </DialogButton>
        <DialogButton label="OK" primary>
          <Svg>
            <path d="M2 10l6 6L18 4l-1-1-9 8-4-3z" fill="#109018" stroke="#109018" strokeWidth="1.500" />
          </Svg>
        </DialogButton>
        <DialogButton label="Cancel">
          <Svg>
            <path d="M4 4l12 13M15 3L4 17" stroke="#8c0a0a" strokeWidth="3.600" />
          </Svg>
        </DialogButton>
      </div>
    </div>
  </section>
);

export default function App() {
  return (
    <main className="relative flex h-screen overflow-hidden font-['Liberation_Serif','Noto_Sans_CJK_TC',serif] text-xs text-black">
      <MainWindow />
      <BrowserWindow />
      <DistanceDialog />
      <p className="absolute right-5 bottom-[3px] font-['Liberation_Sans','Noto_Sans_CJK_SC',sans-serif] text-lg leading-5 font-bold whitespace-nowrap text-white [-webkit-text-stroke:3px_#d42a38] [paint-order:stroke]">
        三维网www.3dportal.cn
      </p>
    </main>
  );
}
